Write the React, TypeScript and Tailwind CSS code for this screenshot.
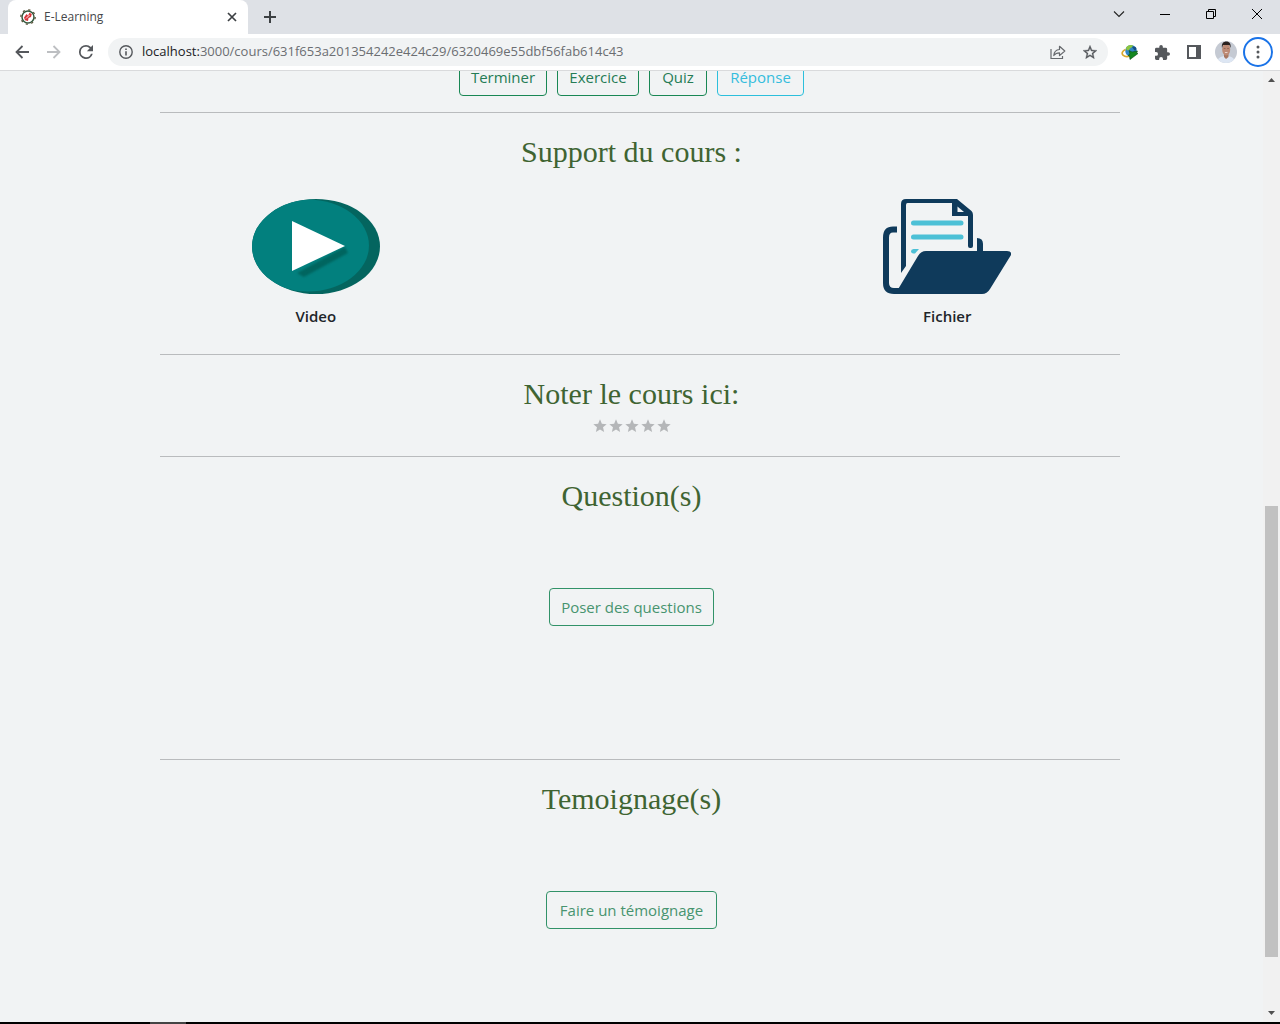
import React from 'react';

const BUTTON = 'h-[38px] shrink-0 rounded border text-center text-[15px] leading-6 whitespace-nowrap';

function Favicon() {
  return (
    <svg viewBox="0 0 16 16" className="h-4 w-4 shrink-0" aria-hidden="true">
      <circle cx="8" cy="8" r="6" fill="#fff" stroke="#35593f" strokeWidth="1.5" />
      <circle cx="8" cy="8" r="7.2" fill="none" stroke="#5a5238" strokeWidth="1.3" strokeDasharray="2.2 3.45" />
      <path d="M4 8.500 6.500 5l1.500 1.500L9.500 3.800l2.300 1.200L11 8l-2.500 1L8 12l-3-.8z" fill="#d9363b" />
      <path d="m6 9.500 3.500-3.500" stroke="#fff" strokeWidth="0.9" />
    </svg>
  );
}

function TitleBar() {
  return (
    <div className="flex h-[34px] bg-[#dee1e6] pl-2">
      <div className="flex w-60 items-center rounded-t-lg bg-white pr-2 pl-3">
        <Favicon />
        <span className="ml-2 flex-1 text-[12px] text-[#45474a]">E-Learning</span>
        <button aria-label="Fermer l'onglet" className="grid h-4 w-4 place-items-center">
          <svg viewBox="0 0 10 10" className="h-[10px] w-[10px]" stroke="#3c4043" strokeWidth="1.7">
            <path d="m1 1 8 8M9 1 1 9" />
          </svg>
        </button>
      </div>
      <button aria-label="Nouvel onglet" className="ml-3 grid w-5 place-items-center">
        <svg viewBox="0 0 12 12" className="h-3 w-3" stroke="#3c4043" strokeWidth="2">
          <path d="M6 0v12M0 6h12" />
        </svg>
      </button>
      <div className="ml-auto flex h-7">
        <button aria-label="Rechercher dans les onglets" className="grid w-[46px] place-items-center">
          <svg viewBox="0 0 12 8" className="h-2 w-3" fill="none" stroke="#222" strokeWidth="1.1">
            <path d="m1 1.500 5 5 5-5" />
          </svg>
        </button>
        <button aria-label="Réduire" className="grid w-[46px] place-items-center">
          <svg viewBox="0 0 10 10" className="h-[10px] w-[10px]" stroke="#000">
            <path d="M0 5.500h10" />
          </svg>
        </button>
        <button aria-label="Restaurer" className="grid w-[46px] place-items-center">
          <svg viewBox="0 0 10 10" className="h-[10px] w-[10px]" fill="none" stroke="#000">
            <path d="M.5 2.500h7v7h-7zM2.500 2.500v-2h7v7h-2" />
          </svg>
        </button>
        <button aria-label="Fermer" className="grid w-[46px] place-items-center">
          <svg viewBox="0 0 10 10" className="h-[10px] w-[10px]" stroke="#000">
            <path d="m0 0 10 10M10 0 0 10" />
          </svg>
        </button>
      </div>
    </div>
  );
}

function ToolBar() {
  return (
    <div className="flex h-9 items-center bg-white pr-[7px] pl-3">
      <button aria-label="Précédent" className="grid h-5 w-5 place-items-center">
        <svg viewBox="0 0 14 14" className="h-[14px] w-[14px]" fill="none" stroke="#55585c" strokeWidth="1.8">
          <path d="M14 7H1.500M7.500 1l-6 6 6 6" />
        </svg>
      </button>
      <button aria-label="Suivant" className="ml-3 grid h-5 w-5 place-items-center">
        <svg viewBox="0 0 14 14" className="h-[14px] w-[14px]" fill="none" stroke="#bdbfc2" strokeWidth="1.8">
          <path d="M0 7h12.500M6.500 1l6 6-6 6" />
        </svg>
      </button>
      <button aria-label="Actualiser" className="ml-3 grid h-5 w-5 place-items-center">
        <svg viewBox="4 4 16 16" className="h-[14px] w-[14px]" fill="#55585c">
          <path d="M17.650 6.350A7.960 7.960 0 0 0 12 4a8 8 0 1 0 7.730 10h-2.080A6 6 0 1 1 12 6c1.660 0 3.140.69 4.220 1.780L13 11h7V4z" />
        </svg>
      </button>
      <div className="ml-3 flex h-7 flex-1 items-center rounded-full bg-[#f1f3f4] pr-[10px] pl-[11px]">
        <svg viewBox="0 0 14 14" className="h-[14px] w-[14px] shrink-0" fill="none" stroke="#55585c" strokeWidth="1.400">
          <circle cx="7" cy="7" r="6.200" />
          <path d="M7 6.200v4.300M7 3.500V5" strokeWidth="1.600" />
        </svg>
        <span className="ml-[9px] flex-1 text-[13px] text-[#6b6e72]">
          <span className="text-[#202124]">localhost:</span>3000/cours/631f653a201354242e424c29/6320469e55dbf56fab614c43
        </span>
        <button aria-label="Partager" className="grid h-4 w-4 place-items-center">
          <svg viewBox="0 0 16 16" className="h-4 w-4" fill="none" stroke="#66696d" strokeWidth="1.200">
            <path d="M1 5v9.500h11.500V12" />
            <path d="M9.500 5.500V2.300L14.800 7l-5.300 4.600V8.800C7 8.800 5.300 9.500 3.800 11.500c.3-3.500 2.200-5.700 5.700-6z" strokeLinejoin="round" />
          </svg>
        </button>
        <button aria-label="Ajouter aux favoris" className="ml-4 grid h-4 w-4 place-items-center">
          <svg viewBox="2 2 20 19" className="h-[14px] w-[14px]" fill="#55585c" stroke="#55585c" strokeWidth=".5">
            <path d="m22 9.240-7.190-.62L12 2 9.190 8.630 2 9.240l5.460 4.730L5.820 21 12 17.270 18.180 21l-1.630-7.030zM12 15.400l-3.760 2.270 1-4.280-3.320-2.880 4.380-.38L12 6.100l1.710 4.040 4.380.38-3.320 2.880 1 4.280z" />
          </svg>
        </button>
      </div>
      <button aria-label="Gestionnaire de téléchargement" className="ml-3 grid h-5 w-5 place-items-center">
        <svg viewBox="0 0 18 16" className="h-4 w-[18px]">
          <circle cx="10" cy="6.800" r="5.800" fill="#2f86c5" />
          <path d="M5 3.500C7 .5 11 .5 12 1.500c0 2-3 2-4 4.500-1 1-3 0-3-2.500z" fill="#8cc63f" />
          <path d="M11 3c2-1 4-.5 4.500 2L14 7z" fill="#154f82" />
          <path d="M4.500 5.500C1 7 .5 9.500 2 11.200c2 1.600 5 1.500 7 .6" fill="none" stroke="#d9a92c" strokeWidth="1.700" />
          <path d="m8 6.500 3 1.500 5.500-1-1 2 1.500.5-8 6-.5-3.500-1.500-.5 2-1.500z" fill="#13871f" stroke="#084d13" strokeWidth=".6" />
        </svg>
      </button>
      <button aria-label="Extensions" className="ml-3 grid h-5 w-5 place-items-center">
        <svg viewBox="2 1 21 21" className="h-[15px] w-[15px]" fill="#55585c">
          <path d="M20.500 11H19V7a2 2 0 0 0-2-2h-4V3.500a2.500 2.500 0 0 0-5 0V5H4a2 2 0 0 0-2 2v3.800h1.500a2.700 2.700 0 0 1 0 5.400H2V20a2 2 0 0 0 2 2h3.800v-1.500a2.700 2.700 0 0 1 5.400 0V22H17a2 2 0 0 0 2-2v-4h1.500a2.500 2.500 0 0 0 0-5z" />
        </svg>
      </button>
      <button aria-label="Panneau latéral" className="ml-3 grid h-5 w-5 place-items-center">
        <svg viewBox="0 0 14 14" className="h-[14px] w-[14px]">
          <path d="M1 1h12v12H1z" fill="#fff" stroke="#55585c" strokeWidth="2" />
          <path d="M9 1h4v12H9z" fill="#55585c" />
        </svg>
      </button>
      <button aria-label="Profil" className="ml-[11px] h-[22px] w-[22px] overflow-hidden rounded-full bg-[#c5cad3]">
        <svg viewBox="0 0 22 22" className="h-full w-full">
          <path d="M2 22c0-5 4-6 6.500-7h5c3 1 6.500 2 6.500 7z" fill="#dde6f3" />
          <path d="M9 12h4.500v4L11 18l-2-2z" fill="#a87761" />
          <ellipse cx="11.200" cy="8.500" rx="4" ry="6" fill="#bd8a75" />
          <path d="M7 7C6.200 2.500 8.500.5 11.500.5S16.300 3 15.500 7L14.500 4H8z" fill="#29211f" />
          <path d="M8.800 7.500h1.700M12.200 7.500h1.700" stroke="#7d5a4c" strokeWidth=".7" />
          <path d="M9.900 11.500h2.600" stroke="#f3e4df" strokeWidth=".8" />
        </svg>
      </button>
      <button aria-label="Menu" className="ml-[6px] grid h-[30px] w-[30px] shrink-0 place-items-center rounded-full border-2 border-[#1a73e8]">
        <svg viewBox="0 0 4 14" className="h-[14px] w-1" fill="#55585c">
          <circle cx="2" cy="2" r="1.500" />
          <circle cx="2" cy="7" r="1.500" />
          <circle cx="2" cy="12" r="1.500" />
        </svg>
      </button>
    </div>
  );
}

function VideoIcon() {
  return (
    <svg viewBox="0 0 128 95" className="h-[95px] w-32" aria-hidden="true">
      <defs>
        <clipPath id="disc">
          <ellipse cx="64" cy="47.500" rx="64" ry="47.500" />
        </clipPath>
        <filter id="soft">
          <feGaussianBlur stdDeviation="1.200" />
        </filter>
      </defs>
      <g clipPath="url(#disc)">
        <path d="M0 0h128v95H0z" fill="#04655f" />
        <ellipse cx="56" cy="46.500" rx="61" ry="46" fill="#02807e" />
        <path d="m45 74 7 4 44-24-3-6z" fill="#04655f" filter="url(#soft)" />
      </g>
      <path d="M40 22v50l53-25z" fill="#fff" />
    </svg>
  );
}

function FileIcon() {
  return (
    <svg viewBox="0 0 128 95" className="h-[95px] w-32" aria-hidden="true">
      <path d="M14 30.500h-4q-7 0-7 8V84q0 8 8 8h10" fill="none" stroke="#0f3a5b" strokeWidth="6" />
      <path d="M18 74V5q0-5 5-5h51l14.500 12q1.500 1.500 1.500 4v31q0 2-2 2h-1q-2 0-2-2V17H69V4H24.500q-1.500 0-1.500 2v61z" fill="#0f3a5b" />
      <path d="M74.500 7.500V13H81z" fill="#f1f3f4" />
      <path d="M94 39q6 0 6 6v8h-6z" fill="#0f3a5b" />
      <path d="M30.500 24h47.500M30.500 38h47.500" stroke="#4cc0d6" strokeWidth="5" strokeLinecap="round" />
      <path d="M30.500 50H36l-4 4.500h-2q-2-.5-2-2.300t2.500-2.200z" fill="#4cc0d6" />
      <path d="M14 92 35 57q3-5 8-5h81q5 0 4 4l-21 34q-3 5-8 5H14z" fill="#0f3a5b" />
    </svg>
  );
}

function Divider() {
  return <hr className="ml-40 w-240 max-w-[calc(100%-160px)] border-[#b9bbbd]" />;
}

function Heading({ children }: { children: React.ReactNode }) {
  return (
    <h2 className="mt-[23px] text-center font-['Liberation_Serif',serif] text-3xl leading-8 text-[#3f6432]">
      {children}
    </h2>
  );
}

function Support({ icon, label }: { icon: React.ReactNode; label: string }) {
  return (
    <a href="#" className="flex flex-col items-center gap-[10px]">
      {icon}
      <span className="text-[15px] leading-6 font-semibold text-[#212529]">{label}</span>
    </a>
  );
}

function Course() {
  return (
    <main className="min-w-0 flex-1 overflow-hidden">
      <div className="-mt-[13px] mb-4 flex justify-center gap-[10px]">
        <button className={`${BUTTON} w-[88px] border-[#198754] text-[#257c55]`}>Terminer</button>
        <button className={`${BUTTON} w-[82px] border-[#198754] text-[#257c55]`}>Exercice</button>
        <button className={`${BUTTON} w-[58px] border-[#198754] text-[#257c55]`}>Quiz</button>
        <button className={`${BUTTON} w-[87px] border-[#2cbfdc] text-[#35bddd]`}>Réponse</button>
      </div>
      <Divider />
      <section>
        <Heading>Support du cours :</Heading>
        <div className="mt-[31px] mb-[26px] grid grid-cols-2">
          <Support icon={<VideoIcon />} label="Video" />
          <Support icon={<FileIcon />} label="Fichier" />
        </div>
      </section>
      <Divider />
      <section>
        <Heading>Noter le cours ici:</Heading>
        <div className="mt-2 mb-[22px] flex justify-center">
          {[1, 2, 3, 4, 5].map((n) => (
            <button key={n} aria-label={`Note ${n}`} className="h-4 w-4">
              <svg viewBox="0 0 24 24" className="h-4 w-4" fill="#b4b6b8">
                <path d="M12 17.270 18.180 21l-1.640-7.030L22 9.240l-7.190-.61L12 2 9.190 8.630 2 9.240l5.460 4.730L5.820 21z" />
              </svg>
            </button>
          ))}
        </div>
      </section>
      <Divider />
      <section>
        <Heading>Question(s)</Heading>
        <div className="mt-[76px] mb-[133px] flex justify-center">
          <button className={`${BUTTON} w-[165px] border-[#329268] text-[#47946f]`}>Poser des questions</button>
        </div>
      </section>
      <Divider />
      <section>
        <Heading>Temoignage(s)</Heading>
        <div className="mt-[76px] flex justify-center">
          <button className={`${BUTTON} w-[171px] border-[#329268] text-[#47946f]`}>Faire un témoignage</button>
        </div>
      </section>
    </main>
  );
}

function ScrollBar() {
  return (
    <div className="flex w-[17px] shrink-0 flex-col items-center bg-[#f1f1f1] px-[2px] py-[7px]" aria-hidden="true">
      <svg viewBox="0 0 7 4" className="h-1 w-[7px]" fill="#505050"><path d="M0 4h7L3.500 0z" /></svg>
      <div className="grow-[424]" />
      <div className="w-full grow-[451] bg-[#c1c1c1]" />
      <div className="grow-[54]" />
      <svg viewBox="0 0 7 4" className="h-1 w-[7px]" fill="#505050"><path d="M0 0h7L3.500 4z" /></svg>
    </div>
  );
}

export default function App() {
  return (
    <div className="flex min-h-screen flex-col bg-[#f1f3f4] font-['Open_Sans','Noto_Sans',sans-serif]">
      <header className="border-b border-[#d9dadc]">
        <TitleBar />
        <ToolBar />
      </header>
      <div className="flex flex-1">
        <Course />
        <ScrollBar />
      </div>
      <footer className="h-[2px] bg-black pl-[150px]">
        <div className="h-full w-9 bg-[#444]" />
      </footer>
    </div>
  );
}
